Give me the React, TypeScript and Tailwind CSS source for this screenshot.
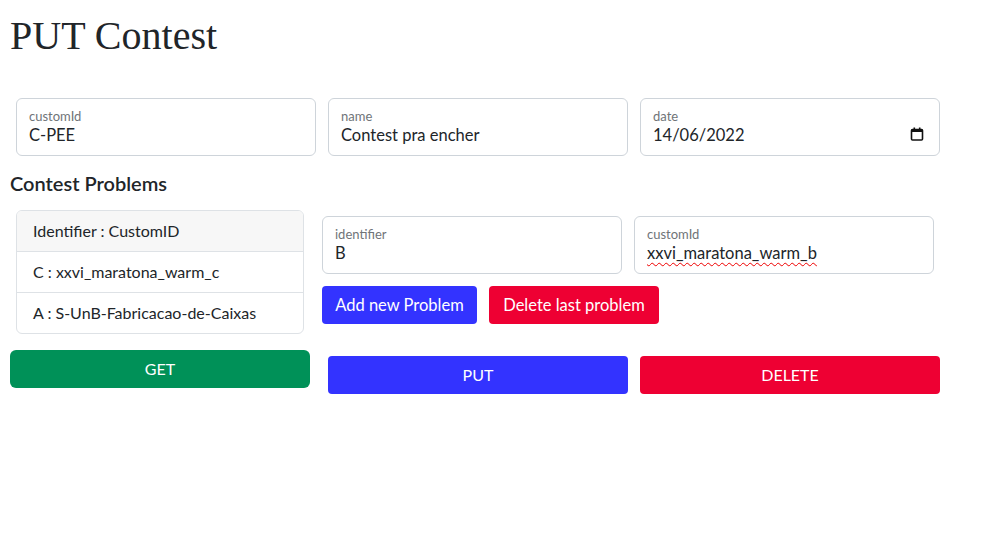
import React from "react";

const font = { fontFamily: '"Lato", "Noto Sans", sans-serif' };

function Field({ label, value, width, date, spell }: { label: string; value: string; width: string; date?: boolean; spell?: boolean }) {
  return (
    <div className={`${width} h-[58px] border border-[#ced4da] rounded-[6px] bg-white px-[12px] pt-[9px] flex flex-col relative`}>
      <span className="text-[13px] leading-[16px] text-[#6f7478]">{label}</span>
      <span className="text-[16.5px] leading-[20px] text-[#212529] mt-[1px]">
        {spell ? (
          <span className="underline decoration-wavy decoration-[#e00] decoration-1 underline-offset-[3px]">{value}</span>
        ) : (
          value
        )}
      </span>
      {date && (
        <svg className="absolute right-[15px] top-[28px]" width="14" height="14" viewBox="0 0 14 14">
          <rect x="1.5" y="2.5" width="11" height="10.5" rx="1" fill="none" stroke="#111" strokeWidth="1.6" />
          <rect x="1.5" y="2.5" width="11" height="2.5" fill="#111" />
          <rect x="3.5" y="0.5" width="1.6" height="2.5" fill="#111" />
          <rect x="8.9" y="0.5" width="1.6" height="2.5" fill="#111" />
        </svg>
      )}
    </div>
  );
}

export default function App() {
  return (
    <div className="w-[1003px] h-[540px] bg-white px-[10px] pt-[14px]" style={font}>
      <h1 className="text-[40px] leading-[44px] text-[#212529]" style={{ fontFamily: '"Liberation Serif", serif' }}>
        PUT Contest
      </h1>
      <div className="flex gap-[12px] ml-[6px] mt-[40px]">
        <Field label="customId" value="C-PEE" width="w-[300px]" />
        <Field label="name" value="Contest pra encher" width="w-[300px]" />
        <Field label="date" value="14/06/2022" width="w-[300px]" date />
      </div>
      <h5 className="text-[20px] leading-[24px] font-semibold text-[#212529] mt-[15px]">Contest Problems</h5>
      <div className="flex mt-[15px]">
        <div className="flex flex-col w-[300px]">
          <div className="ml-[6px] w-[288px] border border-[#dee2e6] rounded-[6px] overflow-hidden text-[16px] text-[#212529]">
            <div className="h-[41px] bg-[#f7f7f7] border-b border-[#dee2e6] px-[16px] flex items-center">Identifier : CustomID</div>
            <div className="h-[41px] border-b border-[#dee2e6] px-[16px] flex items-center">C : xxvi_maratona_warm_c</div>
            <div className="h-[40px] px-[16px] flex items-center">A : S-UnB-Fabricacao-de-Caixas</div>
          </div>
          <button className="mt-[16px] w-[300px] h-[38px] rounded-[6px] bg-[#009158] text-white text-[16px]">GET</button>
        </div>
        <div className="flex flex-col ml-[12px] mt-[6px]">
          <div className="flex gap-[12px]">
            <Field label="identifier" value="B" width="w-[300px]" />
            <Field label="customId" value="xxvi_maratona_warm_b" width="w-[300px]" spell />
          </div>
          <div className="flex gap-[12px] mt-[12px]">
            <button className="w-[155px] h-[38px] rounded-[4px] bg-[#3333ff] text-white text-[16.5px]">Add new Problem</button>
            <button className="w-[170px] h-[38px] rounded-[4px] bg-[#ee0033] text-white text-[16.5px]">Delete last problem</button>
          </div>
          <div className="flex gap-[12px] mt-[32px] ml-[6px]">
            <button className="w-[300px] h-[38px] rounded-[4px] bg-[#3333ff] text-white text-[16px]">PUT</button>
            <button className="w-[300px] h-[38px] rounded-[4px] bg-[#ee0033] text-white text-[16px]">DELETE</button>
          </div>
        </div>
      </div>
    </div>
  );
}
